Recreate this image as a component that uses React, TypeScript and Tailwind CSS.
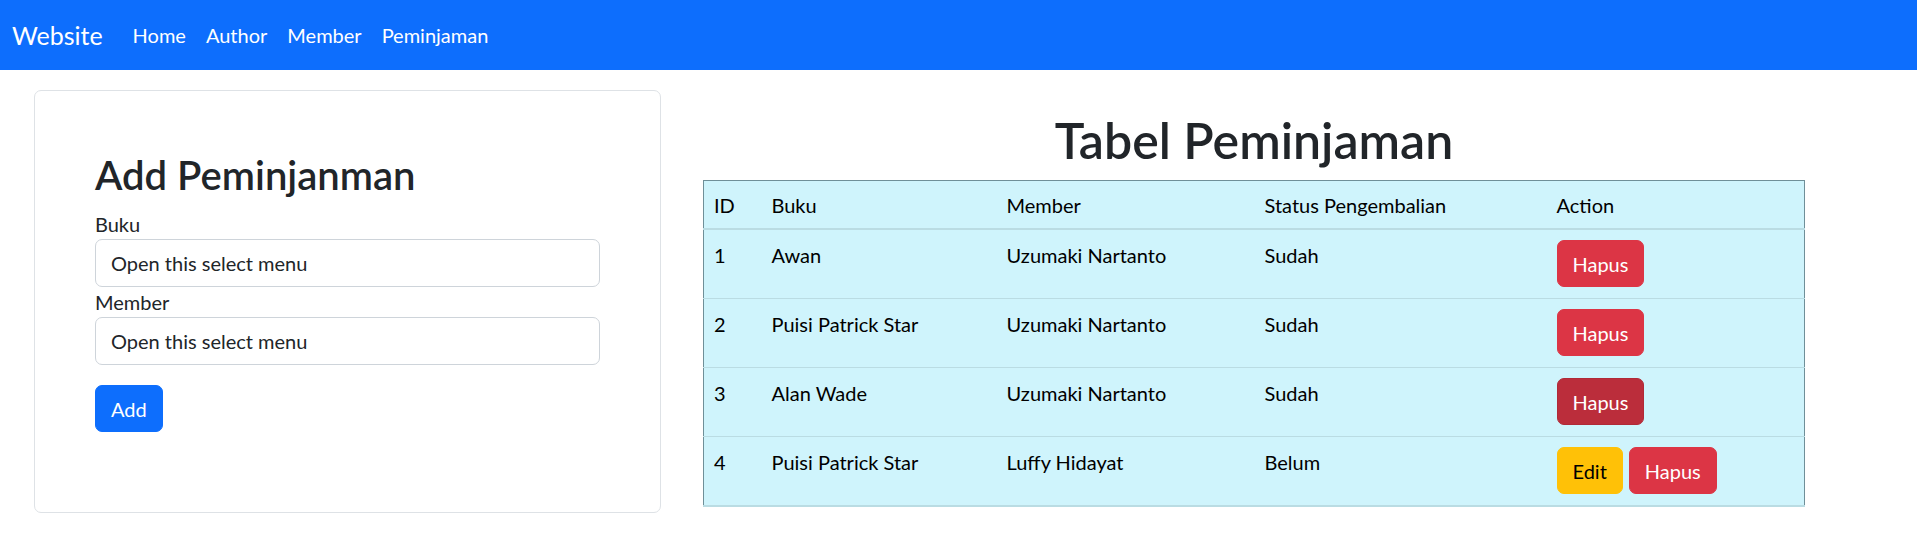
import React from 'react';

type Loan = {
  id: number;
  buku: string;
  member: string;
  status: string;
  canEdit: boolean;
  active?: boolean;
};

const loans: Loan[] = [
  { id: 1, buku: 'Awan', member: 'Uzumaki Nartanto', status: 'Sudah', canEdit: false },
  { id: 2, buku: 'Puisi Patrick Star', member: 'Uzumaki Nartanto', status: 'Sudah', canEdit: false },
  { id: 3, buku: 'Alan Wade', member: 'Uzumaki Nartanto', status: 'Sudah', canEdit: false, active: true },
  { id: 4, buku: 'Puisi Patrick Star', member: 'Luffy Hidayat', status: 'Belum', canEdit: true },
];

const navLinks = ['Home', 'Author', 'Member', 'Peminjaman'];

const App: React.FC = () => {
  return (
    <div className="min-h-[536px] bg-white text-[20px] leading-[30px] text-[#212529] font-['Lato','Noto_Sans',sans-serif]">
      {/* Navbar */}
      <nav className="flex h-[70px] items-center bg-[#0d6efd] pl-[12px]">
        <span className="mr-[20px] text-[25px] leading-[37px] text-white">Website</span>
        <ul className="flex">
          {navLinks.map(link => (
            <li key={link}>
              <a href="#" className="block px-[10px] py-[10px] text-white">
                {link}
              </a>
            </li>
          ))}
        </ul>
      </nav>

      <div className="flex items-start">
        {/* Form card */}
        <div className="ml-[34px] mt-[20px] w-[627px] rounded-[7px] border border-[#dee2e6] p-[60px]">
          <h2 className="mb-[10px] text-[40px] font-semibold leading-[48px]">Add Peminjanman</h2>
          <label className="block">Buku</label>
          <div className="h-[48px] rounded-[7px] border border-[#ced4da] px-[15px] py-[8px] text-[#212529]">
            Open this select menu
          </div>
          <label className="block">Member</label>
          <div className="h-[48px] rounded-[7px] border border-[#ced4da] px-[15px] py-[8px] text-[#212529]">
            Open this select menu
          </div>
          <button className="mb-[20px] mt-[20px] h-[47px] rounded-[7px] border border-[#0d6efd] bg-[#0d6efd] px-[15px] text-white">
            Add
          </button>
        </div>

        {/* Table */}
        <div className="ml-[42px] mt-[40px] w-[1102px]">
          <h1 className="mb-[10px] text-center text-[50px] font-semibold leading-[60px]">Tabel Peminjaman</h1>
          <table className="w-full table-fixed border-collapse border-x border-t border-[#6f8f98] bg-[#cff4fc] text-black">
            <colgroup>
              <col className="w-[58px]" />
              <col className="w-[235px]" />
              <col className="w-[258px]" />
              <col className="w-[292px]" />
              <col />
            </colgroup>
            <thead>
              <tr className="border-b-2 border-[#badce3] text-left">
                <th className="px-[10px] pb-[8px] pt-[9px] font-normal">ID</th>
                <th className="px-[10px] pb-[8px] pt-[9px] font-normal">Buku</th>
                <th className="px-[10px] pb-[8px] pt-[9px] font-normal">Member</th>
                <th className="px-[10px] pb-[8px] pt-[9px] font-normal">Status Pengembalian</th>
                <th className="px-[10px] pb-[8px] pt-[9px] font-normal">Action</th>
              </tr>
            </thead>
            <tbody>
              {loans.map((loan, i) => (
                <tr
                  key={loan.id}
                  className={`align-top border-[#badce3] ${i === loans.length - 1 ? 'border-b-2' : 'border-b'}`}
                >
                  <td className="px-[10px] pb-[11px] pt-[10px]">{loan.id}</td>
                  <td className="px-[10px] pb-[11px] pt-[10px]">{loan.buku}</td>
                  <td className="px-[10px] pb-[11px] pt-[10px]">{loan.member}</td>
                  <td className="px-[10px] pb-[11px] pt-[10px]">{loan.status}</td>
                  <td className="px-[10px] pb-[11px] pt-[10px]">
                    <div className="flex gap-[6px]">
                      {loan.canEdit && (
                        <button className="h-[47px] rounded-[7px] border border-[#ffc107] bg-[#ffc107] px-[15px] text-black">
                          Edit
                        </button>
                      )}
                      <button
                        className={`h-[47px] rounded-[7px] px-[15px] text-white ${
                          loan.active ? 'border border-[#b02a37] bg-[#bb2d3b]' : 'border border-[#dc3545] bg-[#dc3545]'
                        }`}
                      >
                        Hapus
                      </button>
                    </div>
                  </td>
                </tr>
              ))}
            </tbody>
          </table>
        </div>
      </div>
    </div>
  );
};

export default App;
